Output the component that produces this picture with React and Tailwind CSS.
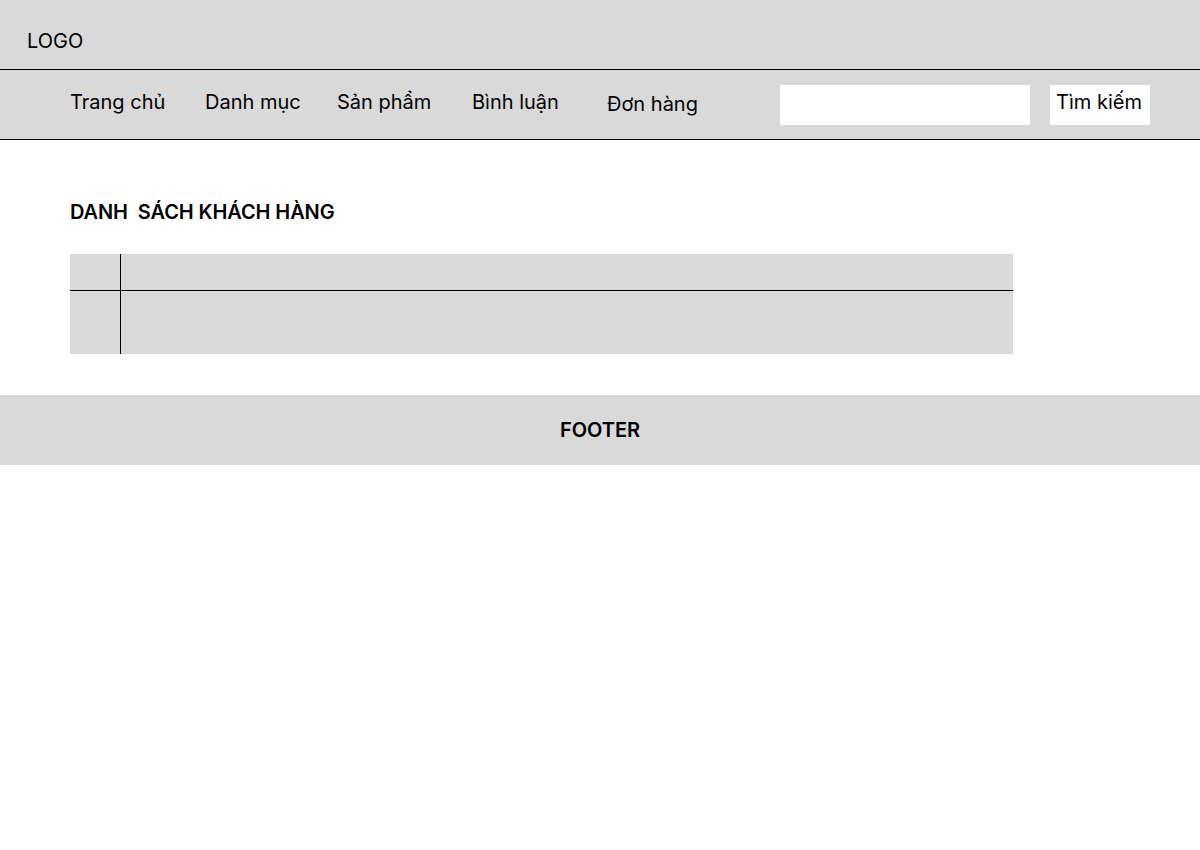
import React from "react";

const navItems = [
  { label: "Trang chủ", className: "w-[135px] mt-[20px]" },
  { label: "Danh mục", className: "w-[132px] mt-[20px]" },
  { label: "Sản phẩm", className: "w-[135px] mt-[20px]" },
  { label: "Bình luận", className: "w-[135px] mt-[20px]" },
  { label: "Đơn hàng", className: "w-[173px] mt-[22px]" },
];

const App = () => {
  return (
    <div className="min-h-screen bg-white text-black font-['Inter',sans-serif]">
      {/* Header */}
      <div className="h-[70px] bg-[#d9d9d9] border-b border-black pl-[27px] pt-[29px]">
        <div className="text-[20px] leading-[24px]">LOGO</div>
      </div>

      {/* Nav */}
      <div className="h-[70px] bg-[#d9d9d9] border-b border-black flex items-start pl-[70px]">
        {navItems.map((item) => (
          <div key={item.label} className={`${item.className} text-[20px] leading-[24px]`}>
            {item.label}
          </div>
        ))}
        <input type="text" className="mt-[15px] w-[250px] h-[40px] bg-white outline-none px-2" />
        <button className="mt-[15px] ml-[20px] w-[100px] h-[40px] bg-white text-left pl-[6px] pt-[5px] flex items-start text-[20px] leading-[24px]">
          Tìm kiếm
        </button>
      </div>

      {/* Content */}
      <div className="pl-[70px] pt-[60px] pb-[41px]">
        <h2 className="text-[20px] leading-[24px] font-semibold tracking-[-0.1px] whitespace-pre">DANH  SÁCH KHÁCH HÀNG</h2>
        <div className="mt-[30px] w-[943px] bg-[#d9d9d9]">
          <div className="flex h-[37px] border-b border-black">
            <div className="w-[51px] border-r border-black" />
            <div className="flex-1" />
          </div>
          <div className="flex h-[63px]">
            <div className="w-[51px] border-r border-black" />
            <div className="flex-1" />
          </div>
        </div>
      </div>

      {/* Footer */}
      <div className="h-[70px] bg-[#d9d9d9] flex items-center justify-center">
        <span className="text-[20px] leading-[24px] font-semibold">FOOTER</span>
      </div>
    </div>
  );
};

export default App;
